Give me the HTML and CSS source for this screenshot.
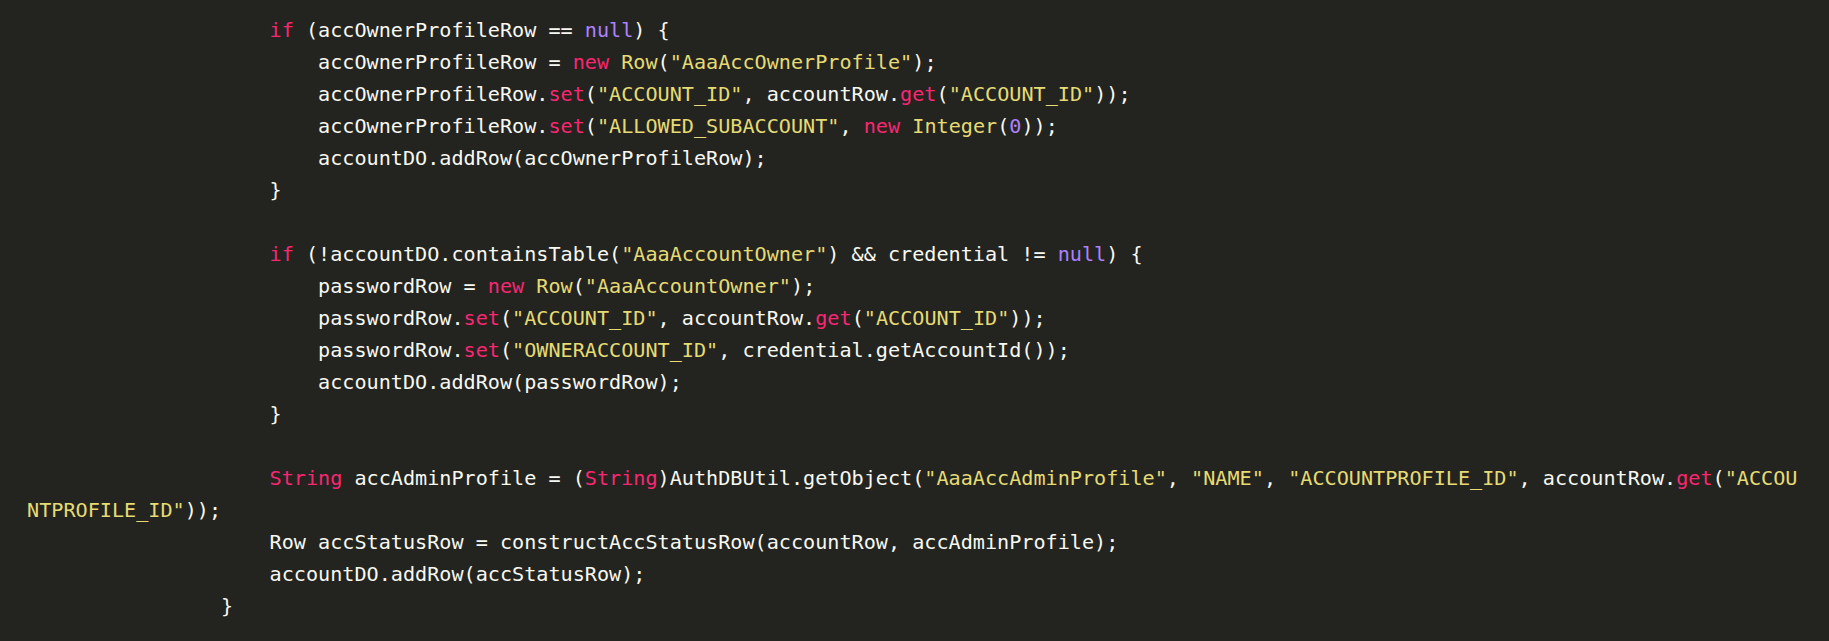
FILE: index.html
```html
<!DOCTYPE html>
<html lang="en">
<head>
<meta charset="utf-8">
<title>Code</title>
<link rel="stylesheet" href="styles.css">
</head>
<body>
<pre class="code"><code>                    <span class="kw">if</span> (accOwnerProfileRow == <span class="lit">null</span>) {
                        accOwnerProfileRow = <span class="kw">new</span> <span class="ty">Row</span>(<span class="str">"AaaAccOwnerProfile"</span>);
                        accOwnerProfileRow.<span class="kw">set</span>(<span class="str">"ACCOUNT_ID"</span>, accountRow.<span class="kw">get</span>(<span class="str">"ACCOUNT_ID"</span>));
                        accOwnerProfileRow.<span class="kw">set</span>(<span class="str">"ALLOWED_SUBACCOUNT"</span>, <span class="kw">new</span> <span class="ty">Integer</span>(<span class="lit">0</span>));
                        accountDO.addRow(accOwnerProfileRow);
                    }

                    <span class="kw">if</span> (!accountDO.containsTable(<span class="str">"AaaAccountOwner"</span>) &amp;&amp; credential != <span class="lit">null</span>) {
                        passwordRow = <span class="kw">new</span> <span class="ty">Row</span>(<span class="str">"AaaAccountOwner"</span>);
                        passwordRow.<span class="kw">set</span>(<span class="str">"ACCOUNT_ID"</span>, accountRow.<span class="kw">get</span>(<span class="str">"ACCOUNT_ID"</span>));
                        passwordRow.<span class="kw">set</span>(<span class="str">"OWNERACCOUNT_ID"</span>, credential.getAccountId());
                        accountDO.addRow(passwordRow);
                    }

                    <span class="kw">String</span> accAdminProfile = (<span class="kw">String</span>)AuthDBUtil.getObject(<span class="str">"AaaAccAdminProfile"</span>, <span class="str">"NAME"</span>, <span class="str">"ACCOUNTPROFILE_ID"</span>, accountRow.<span class="kw">get</span>(<span class="str">"ACCOUNTPROFILE_ID"</span>));
                    Row accStatusRow = constructAccStatusRow(accountRow, accAdminProfile);
                    accountDO.addRow(accStatusRow);
                }</code></pre>
</body>
</html>
```

FILE: styles.css
```css
html, body {
  margin: 0;
  padding: 0;
  background: #23241f;
}

body {
  min-height: 641px;
}

.code {
  margin: 0;
  padding: 14px 0 0 27px;
  font-family: "DejaVu Sans Mono", "Liberation Mono", monospace;
  font-size: 20.15px;
  line-height: 32px;
  color: #f8f8f2;
  background: #23241f;
  white-space: pre-wrap;
  word-break: break-all;
}

.code code {
  display: block;
  width: 146.5ch;
  font-family: inherit;
}

.kw {
  color: #f92672;
}

.str,
.ty {
  color: #e6db74;
}

.lit {
  color: #ae81ff;
}
```
